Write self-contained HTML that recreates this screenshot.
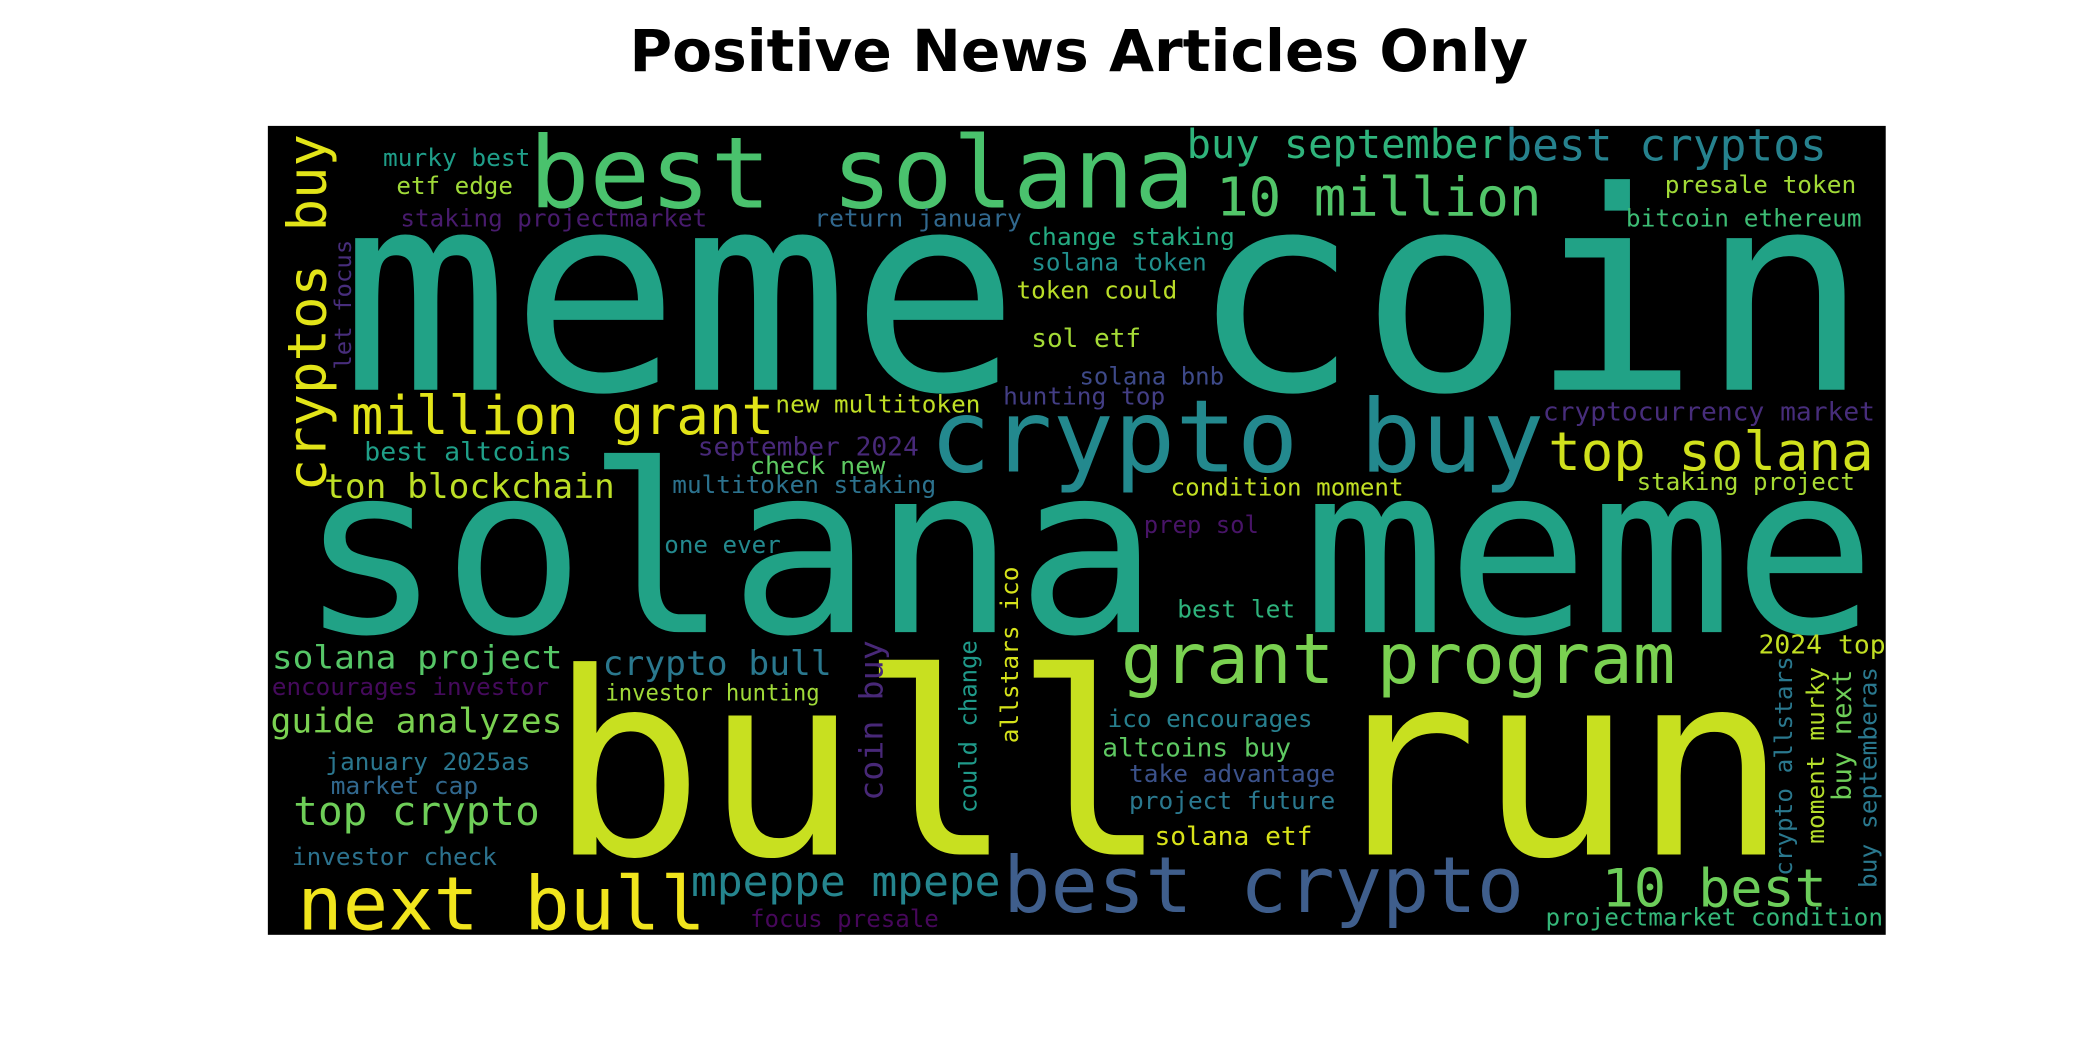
<!DOCTYPE html>
<html><head><meta charset="utf-8"><style>
html,body{margin:0;padding:0;background:#fff;width:2100px;height:1050px;overflow:hidden}
svg{display:block}
text{font-family:"DejaVu Sans Mono","Liberation Mono",monospace}
.t{font-family:"DejaVu Sans","Liberation Sans",sans-serif;font-weight:bold}
</style></head><body>
<svg width="2100" height="1050" viewBox="0 0 1568 784" xmlns="http://www.w3.org/2000/svg">
<rect width="1568" height="784" fill="#fff"/>
<text class="t" x="470" y="53" font-size="43" textLength="671" lengthAdjust="spacingAndGlyphs" fill="#000">Positive News Articles Only</text>
<rect x="200" y="94" width="1208" height="604" fill="#000"/>
<g lengthAdjust="spacingAndGlyphs">
<text x="254" y="291" font-size="207" textLength="1142" lengthAdjust="spacingAndGlyphs" fill="#21a286">meme coin</text>
<text x="223" y="472" font-size="175" textLength="1178" lengthAdjust="spacingAndGlyphs" fill="#21a286">solana meme</text>
<text x="410" y="638" font-size="190" textLength="925" lengthAdjust="spacingAndGlyphs" fill="#c8e020">bull run</text>
<text x="395" y="155" font-size="74" textLength="497" lengthAdjust="spacingAndGlyphs" fill="#4ac26d">best solana</text>
<text x="694" y="352" font-size="75" textLength="459" lengthAdjust="spacingAndGlyphs" fill="#23898e">crypto buy</text>
<text x="837" y="510" font-size="52" textLength="414" lengthAdjust="spacingAndGlyphs" fill="#7ad151">grant program</text>
<text x="262" y="324" font-size="40" textLength="316" lengthAdjust="spacingAndGlyphs" fill="#e2e418">million grant</text>
<text x="908" y="161" font-size="40" textLength="243" lengthAdjust="spacingAndGlyphs" fill="#52c569">10 million</text>
<text x="886" y="118" font-size="30" textLength="236" lengthAdjust="spacingAndGlyphs" fill="#2fb47c">buy september</text>
<text x="1124" y="120" font-size="33" textLength="240" lengthAdjust="spacingAndGlyphs" fill="#26828e">best cryptos</text>
<text x="1156" y="351" font-size="40" textLength="243" lengthAdjust="spacingAndGlyphs" fill="#d0e11c">top solana</text>
<text x="222" y="694" font-size="55" textLength="305" lengthAdjust="spacingAndGlyphs" fill="#f1e51d">next bull</text>
<text x="749" y="681" font-size="58" textLength="389" lengthAdjust="spacingAndGlyphs" fill="#3f5e8c">best crypto</text>
<text x="1196" y="677" font-size="39" textLength="168" lengthAdjust="spacingAndGlyphs" fill="#6ccd5a">10 best</text>
<text x="516" y="669" font-size="31" textLength="231" lengthAdjust="spacingAndGlyphs" fill="#25858e">mpeppe mpepe</text>
<text x="450" y="504" font-size="25" textLength="171" lengthAdjust="spacingAndGlyphs" fill="#2a788e">crypto bull</text>
<text x="203" y="499" font-size="24" textLength="217" lengthAdjust="spacingAndGlyphs" fill="#56c667">solana project</text>
<text x="202" y="547" font-size="25" textLength="218" lengthAdjust="spacingAndGlyphs" fill="#7ad151">guide analyzes</text>
<text x="219" y="616" font-size="30" textLength="184" lengthAdjust="spacingAndGlyphs" fill="#6ece58">top crypto</text>
<text x="242" y="372" font-size="25" textLength="217" lengthAdjust="spacingAndGlyphs" fill="#bddf26">ton blockchain</text>

<text x="203" y="519" font-size="18" textLength="207" lengthAdjust="spacingAndGlyphs" fill="#450a5c">encourages investor</text>
<text x="452" y="523" font-size="17" textLength="160" lengthAdjust="spacingAndGlyphs" fill="#a0da39">investor hunting</text>
<text x="243" y="575" font-size="18" textLength="153" lengthAdjust="spacingAndGlyphs" fill="#2a768e">january 2025as</text>
<text x="247" y="593" font-size="18" textLength="110" lengthAdjust="spacingAndGlyphs" fill="#31688e">market cap</text>
<text x="218" y="646" font-size="18" textLength="153" lengthAdjust="spacingAndGlyphs" fill="#2c728e">investor check</text>
<text x="560" y="692" font-size="18" textLength="141" lengthAdjust="spacingAndGlyphs" fill="#46075a">focus presale</text>
<text x="496" y="413" font-size="18" textLength="87" lengthAdjust="spacingAndGlyphs" fill="#23898e">one ever</text>
<text x="286" y="124" font-size="18" textLength="110" lengthAdjust="spacingAndGlyphs" fill="#1f9e89">murky best</text>
<text x="296" y="145" font-size="18" textLength="87" lengthAdjust="spacingAndGlyphs" fill="#a0da39">etf edge</text>
<text x="299" y="169" font-size="18" textLength="229" lengthAdjust="spacingAndGlyphs" fill="#481b6d">staking projectmarket</text>
<text x="608" y="169" font-size="18" textLength="155" lengthAdjust="spacingAndGlyphs" fill="#31688e">return january</text>
<text x="272" y="344" font-size="19" textLength="155" lengthAdjust="spacingAndGlyphs" fill="#1f9f88">best altcoins</text>
<text x="521" y="340" font-size="19" textLength="165" lengthAdjust="spacingAndGlyphs" fill="#482979">september 2024</text>
<text x="560" y="354" font-size="18" textLength="101" lengthAdjust="spacingAndGlyphs" fill="#5ec962">check new</text>
<text x="502" y="368" font-size="18" textLength="197" lengthAdjust="spacingAndGlyphs" fill="#2c728e">multitoken staking</text>
<text x="579" y="308" font-size="18" textLength="153" lengthAdjust="spacingAndGlyphs" fill="#c0df25">new multitoken</text>
<text x="767" y="183" font-size="18" textLength="155" lengthAdjust="spacingAndGlyphs" fill="#25ab82">change staking</text>
<text x="770" y="202" font-size="18" textLength="131" lengthAdjust="spacingAndGlyphs" fill="#218f8d">solana token</text>
<text x="759" y="223" font-size="18" textLength="120" lengthAdjust="spacingAndGlyphs" fill="#bade28">token could</text>
<text x="770" y="259" font-size="19" textLength="82" lengthAdjust="spacingAndGlyphs" fill="#a5db36">sol etf</text>
<text x="806" y="287" font-size="18" textLength="108" lengthAdjust="spacingAndGlyphs" fill="#3e4a89">solana bnb</text>
<text x="749" y="302" font-size="18" textLength="121" lengthAdjust="spacingAndGlyphs" fill="#433e85">hunting top</text>
<text x="1243" y="144" font-size="18" textLength="143" lengthAdjust="spacingAndGlyphs" fill="#a2da37">presale token</text>
<text x="1214" y="169" font-size="18" textLength="176" lengthAdjust="spacingAndGlyphs" fill="#3dbc74">bitcoin ethereum</text>
<text x="1152" y="314" font-size="19" textLength="248" lengthAdjust="spacingAndGlyphs" fill="#472d7b">cryptocurrency market</text>
<text x="874" y="370" font-size="18" textLength="174" lengthAdjust="spacingAndGlyphs" fill="#c2df23">condition moment</text>
<text x="1222" y="366" font-size="18" textLength="163" lengthAdjust="spacingAndGlyphs" fill="#a8db34">staking project</text>
<text x="854" y="398" font-size="18" textLength="86" lengthAdjust="spacingAndGlyphs" fill="#481467">prep sol</text>
<text x="879" y="461" font-size="18" textLength="88" lengthAdjust="spacingAndGlyphs" fill="#2eb37c">best let</text>
<text x="1313" y="488" font-size="19" textLength="95" lengthAdjust="spacingAndGlyphs" fill="#c2df23">2024 top</text>
<text x="827" y="543" font-size="18" textLength="153" lengthAdjust="spacingAndGlyphs" fill="#277f8e">ico encourages</text>
<text x="823" y="565" font-size="19" textLength="141" lengthAdjust="spacingAndGlyphs" fill="#5ec962">altcoins buy</text>
<text x="843" y="584" font-size="18" textLength="154" lengthAdjust="spacingAndGlyphs" fill="#3b528b">take advantage</text>
<text x="843" y="604" font-size="18" textLength="154" lengthAdjust="spacingAndGlyphs" fill="#2a788e">project future</text>
<text x="862" y="631" font-size="19" textLength="118" lengthAdjust="spacingAndGlyphs" fill="#d8e219">solana etf</text>
<text x="1154" y="691" font-size="18" textLength="252" lengthAdjust="spacingAndGlyphs" fill="#35b779">projectmarket condition</text>

<text transform="translate(243,367) rotate(-90)" font-size="40" textLength="267" lengthAdjust="spacingAndGlyphs" fill="#e2e418">cryptos buy</text>
<text transform="translate(262,276) rotate(-90)" font-size="17" textLength="97" lengthAdjust="spacingAndGlyphs" fill="#472d7b">let focus</text>
<text transform="translate(659,598) rotate(-90)" font-size="24" textLength="120" lengthAdjust="spacingAndGlyphs" fill="#482878">coin buy</text>
<text transform="translate(729,607) rotate(-90)" font-size="18" textLength="129" lengthAdjust="spacingAndGlyphs" fill="#1f9a8a">could change</text>
<text transform="translate(760,555) rotate(-90)" font-size="18" textLength="132" lengthAdjust="spacingAndGlyphs" fill="#d5e21a">allstars ico</text>
<text transform="translate(1338,654) rotate(-90)" font-size="18" textLength="164" lengthAdjust="spacingAndGlyphs" fill="#2a788e">crypto allstars</text>
<text transform="translate(1362,630) rotate(-90)" font-size="18" textLength="132" lengthAdjust="spacingAndGlyphs" fill="#b5de2b">moment murky</text>
<text transform="translate(1382,598) rotate(-90)" font-size="20" textLength="98" lengthAdjust="spacingAndGlyphs" fill="#6ece58">buy next</text>
<text transform="translate(1401,663) rotate(-90)" font-size="18" textLength="165" lengthAdjust="spacingAndGlyphs" fill="#2a788e">buy septemberas</text>
</g>
</svg>
</body></html>
